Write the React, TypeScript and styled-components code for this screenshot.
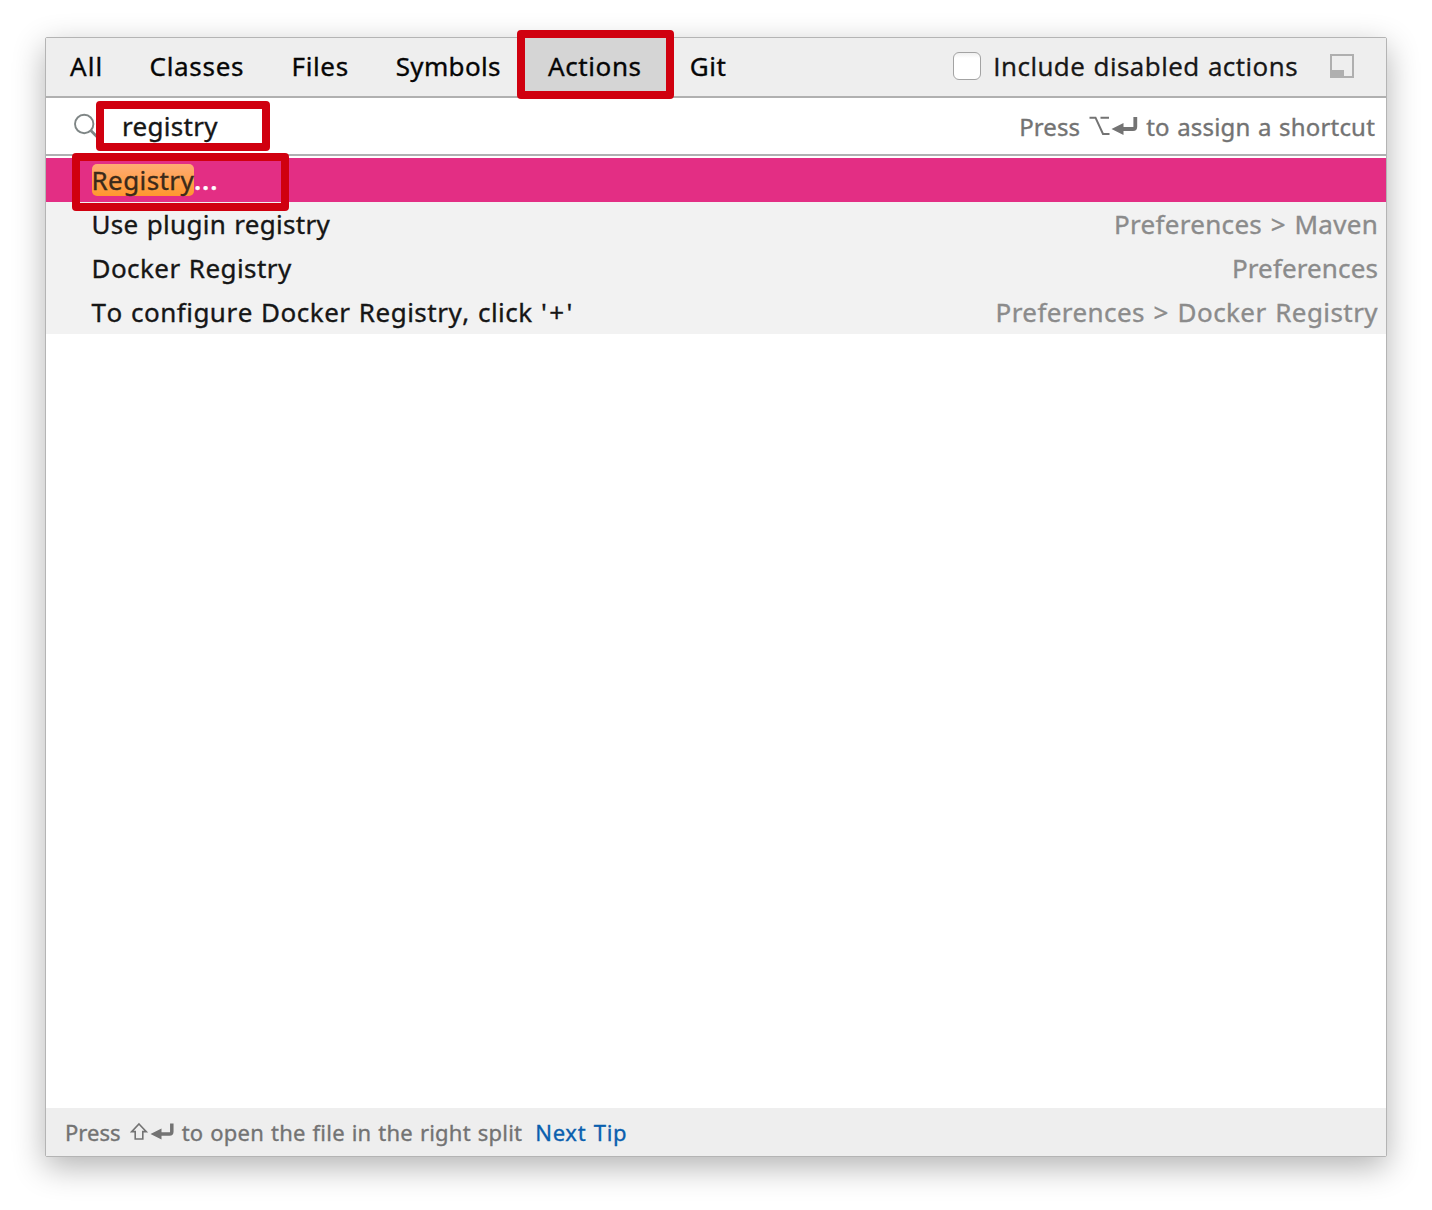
import React from 'react';
import styled, { createGlobalStyle } from 'styled-components';

const GlobalStyle = createGlobalStyle`
  *, *::before, *::after { box-sizing: border-box; }
  body {
    margin: 0;
    background: #fff;
    font-family: "Noto Sans", "Open Sans", sans-serif;
    font-size: 26px;
    overflow: hidden;
    -webkit-text-stroke: 0.35px currentColor;
  }
`;

const Desktop = styled.div`
  position: relative;
  width: 1432px;
  height: 1210px;
  padding: 37px 45px 53px;
`;

const Popup = styled.main`
  display: flex;
  flex-direction: column;
  width: 1342px;
  height: 1120px;
  border: 1px solid #b4b4b4;
  border-radius: 2px;
  background: #fff;
  box-shadow: 0 10px 32px rgba(0, 0, 0, 0.3);
`;

const Text = styled.span<{ $tracking?: number; $gap?: number }>`
  white-space: pre;
  letter-spacing: ${(p) => p.$tracking ?? 0}px;
  word-spacing: ${(p) => p.$gap ?? 1}px;
`;

const OptionLabel = styled(Text)`
  font-family: "Open Sans", "Noto Sans", sans-serif;
`;

const TabBar = styled.header`
  display: flex;
  align-items: stretch;
  justify-content: space-between;
  height: 60px;
  background: #eeeeee;
  border-bottom: 2px solid #b0b0b0;
`;

const Tabs = styled.nav`
  display: grid;
  grid-template-columns: 80px 142px 104px 152px 142px 84px;
`;

const Tab = styled.div<{ $active?: boolean; $indent: number }>`
  display: flex;
  align-items: center;
  padding: 0 0 2px ${(p) => p.$indent}px;
  color: #060606;
  background: ${(p) => (p.$active ? '#d5d5d5' : 'transparent')};
`;

const TabOptions = styled.div`
  display: flex;
  align-items: center;
  padding: 0 32px 2px 0;
  color: #161616;
`;

const Checkbox = styled.span`
  width: 28px;
  height: 28px;
  margin-right: 12px;
  border: 1px solid #a3a3a3;
  border-radius: 6px;
  background: linear-gradient(#f0f0f0, #fff 5px);
`;

const PinIcon = styled.svg`
  display: block;
  width: 24px;
  height: 24px;
  margin-left: 32px;
`;

const SearchRow = styled.div`
  display: flex;
  align-items: center;
  height: 58px;
  padding: 0 11px 0 26px;
  border-bottom: 2px solid #b0b0b2;
`;

const Lens = styled.svg`
  width: 28px;
  height: 28px;
  margin-right: 22px;
`;

const Query = styled.div`
  flex: 1;
  color: #161616;
`;

const Hint = styled.div<{ $size: number; $glyphGap: number }>`
  display: flex;
  align-items: center;
  font-size: ${(p) => p.$size}px;
  color: #737373;

  svg {
    display: block;
    margin: 0 ${(p) => p.$glyphGap}px 0 9px;
  }
`;

const Results = styled.ul`
  flex: 1;
  margin: 0;
  padding: 2px 0 0;
  list-style: none;
`;

const ResultRow = styled.li<{ $selected?: boolean }>`
  display: flex;
  align-items: center;
  justify-content: space-between;
  height: 44px;
  padding: 0 8px 0 ${(p) => (p.$selected ? 46 : 45.5)}px;
  color: ${(p) => (p.$selected ? '#fff' : '#161616')};
  background: ${(p) => (p.$selected ? '#e32e84' : '#f2f2f2')};
`;

const ResultLabel = styled.span<{ $kerned?: boolean }>`
  font-kerning: ${(p) => (p.$kerned === false ? 'none' : 'auto')};
`;

const Match = styled.mark`
  display: inline-flex;
  align-items: center;
  width: 102px;
  height: 32px;
  border-radius: 5px;
  color: #3b2a1a;
  background: linear-gradient(#ffab73, #ff982e);

  span { margin-left: -0.5px; }
`;

const Ellipsis = styled.span`
  font-weight: 600;
  letter-spacing: 0.9px;
`;

const Location = styled.span`
  color: #8b8b8b;
`;

const Footer = styled.footer`
  display: flex;
  align-items: center;
  height: 48px;
  padding: 0 0 1px 19px;
  background: #eeeeee;
`;

const TipLink = styled.a`
  margin-left: 13px;
  font-size: 22px;
  color: #0a5fae;
`;

const Callout = styled.div<{ $x: number; $y: number; $w: number; $h: number }>`
  position: absolute;
  left: ${(p) => p.$x}px;
  top: ${(p) => p.$y}px;
  width: ${(p) => p.$w}px;
  height: ${(p) => p.$h}px;
  border: 8px solid #d0000f;
  border-radius: 4px;
`;

const tabs = [
  { label: 'All', tracking: 1.1, indent: 24 },
  { label: 'Classes', tracking: 0.7, indent: 23.5 },
  { label: 'Files', tracking: 0.65, indent: 23.5 },
  { label: 'Symbols', tracking: 0.35, indent: 23.7 },
  { label: 'Actions', tracking: 0.6, indent: 24, active: true },
  { label: 'Git', tracking: 0.6, indent: 23.7 },
];

const results = [
  { parts: [{ text: 'Use plugin registry', tracking: 0.32, gap: 1 }], location: 'Preferences > Maven', locTracking: 0.3 },
  { parts: [{ text: 'Docker Registry', tracking: 0.44, gap: 1 }], location: 'Preferences', locTracking: 0.12 },
  {
    parts: [
      { text: 'To configure Docker Registry, click ', tracking: 0.5, gap: 1 },
      { text: "'+'", tracking: 2.4, gap: 0 },
    ],
    kerned: false,
    location: 'Preferences > Docker Registry',
    locTracking: 0.42,
  },
];

export default function App() {
  return (
    <>
      <GlobalStyle />
      <Desktop>
        <Popup>
          <TabBar>
            <Tabs>
              {tabs.map((t) => (
                <Tab key={t.label} $active={t.active} $indent={t.indent}>
                  <Text $tracking={t.tracking}>{t.label}</Text>
                </Tab>
              ))}
            </Tabs>
            <TabOptions>
              <Checkbox />
              <OptionLabel $tracking={0.48}>Include disabled actions</OptionLabel>
              <PinIcon viewBox="0 0 24 24">
                <rect x="1" y="1" width="22" height="22" fill="none" stroke="#afafaf" strokeWidth="2" />
                <rect x="0" y="16" width="14" height="8" fill="#afafaf" />
              </PinIcon>
            </TabOptions>
          </TabBar>

          <SearchRow>
            <Lens viewBox="0 0 28 28" fill="none" stroke="#7f8686">
              <circle cx="12.2" cy="12" r="9.2" strokeWidth="1.9" />
              <path d="M18.8 18.6 L26.5 26.3" strokeWidth="2.8" />
            </Lens>
            <Query>
              <Text $tracking={0.3}>registry</Text>
            </Query>
            <Hint $size={24} $glyphGap={8}>
              <Text $tracking={0.1}>Press</Text>
              <svg width="49" height="20" viewBox="0 0 49 20" fill="none" stroke="#737373">
                <path d="M0.5 1.7 H6.5 L14 18 H20.5 M11.5 1.7 H20" strokeWidth="2" />
                <path d="M31 13 H44 Q46.3 13 46.3 10.7 V1" strokeWidth="3.8" />
                <path d="M22.5 13 L34.5 7 V19 Z" fill="#737373" stroke="none" />
              </svg>
              <Text $tracking={0.19}>to assign a shortcut</Text>
            </Hint>
          </SearchRow>

          <Results>
            <ResultRow $selected>
              <span>
                <Match>
                  <Text $tracking={0.4}>Registry</Text>
                </Match>
                <Ellipsis>...</Ellipsis>
              </span>
            </ResultRow>
            {results.map((r) => (
              <ResultRow key={r.location}>
                <ResultLabel $kerned={r.kerned}>
                  {r.parts.map((p) => (
                    <Text key={p.text} $tracking={p.tracking} $gap={p.gap}>{p.text}</Text>
                  ))}
                </ResultLabel>
                <Location>
                  <Text $tracking={r.locTracking} $gap={1.5}>{r.location}</Text>
                </Location>
              </ResultRow>
            ))}
          </Results>

          <Footer>
            <Hint $size={22} $glyphGap={7}>
              <Text $tracking={0.05}>Press</Text>
              <svg width="45" height="20" viewBox="0 0 45 20" fill="none" stroke="#737373">
                <path d="M9 2 L16.3 9.6 H12.8 V17 H5.2 V9.6 H1.7 Z" strokeWidth="1.6" />
                <path d="M28 12 H39.5 Q41.8 12 41.8 9.7 V1.4" strokeWidth="3.5" />
                <path d="M20.5 12 L31.5 6.4 V17.6 Z" fill="#737373" stroke="none" />
              </svg>
              <Text $tracking={0.22}>to open the file in the right split</Text>
            </Hint>
            <TipLink>
              <Text $tracking={0.7}>Next Tip</Text>
            </TipLink>
          </Footer>
        </Popup>

        <Callout $x={517} $y={30} $w={157} $h={69} />
        <Callout $x={96} $y={101} $w={174} $h={50} />
        <Callout $x={71.5} $y={152.5} $w={217.5} $h={58} />
      </Desktop>
    </>
  );
}
